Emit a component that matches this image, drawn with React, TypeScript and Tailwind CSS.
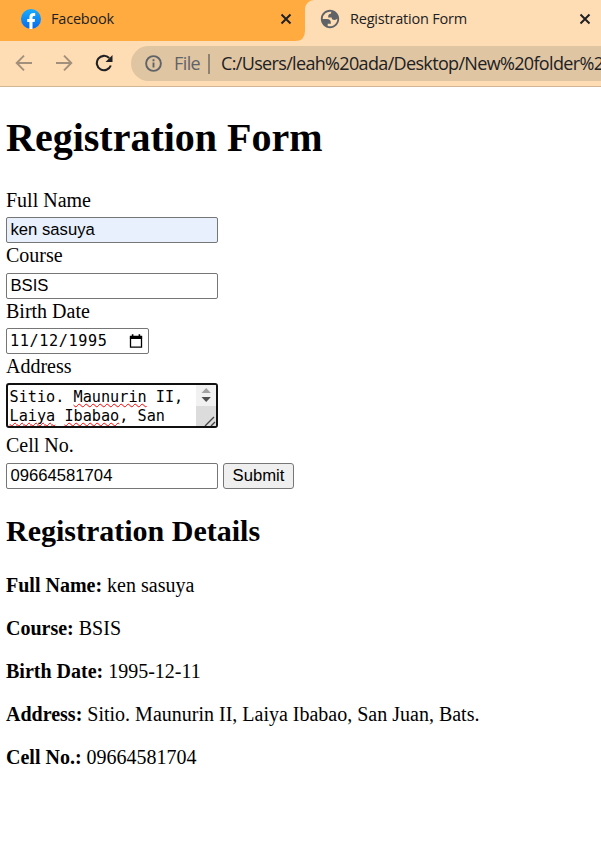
import React from 'react';

const ui = "font-['Open_Sans','Noto_Sans',sans-serif]";
const field =
  "block h-[26px] w-[212px] rounded-[2px] border border-[#767676] px-[3.5px] font-['Liberation_Sans',Arial,sans-serif] text-[16.67px] leading-[22px] text-black outline-none";

function Close() {
  return (
    <svg width="12" height="12" viewBox="0 0 12 12" className="shrink-0" fill="none" stroke="#202124" strokeWidth="2">
      <path d="M1.5 1.5l9 9M10.5 1.5l-9 9" />
    </svg>
  );
}

function Label({ children }: { children: React.ReactNode }) {
  return <label className="block pt-[1px] text-[20px] leading-[22px]">{children}</label>;
}

function Misspelt({ children }: { children: React.ReactNode }) {
  return (
    <span className="underline decoration-[#f00] decoration-wavy decoration-[1.3px] underline-offset-[1px] [text-decoration-skip-ink:none]">
      {children}
    </span>
  );
}

function TabStrip() {
  return (
    <div className={`flex h-[41px] bg-[#ffab40] ${ui} text-[14.5px] text-[#202124]`}>
      <div className="flex h-[41px] w-[305px] items-center bg-[#ffab40] pb-[3px] pl-[21px]">
        <svg width="20" height="20" viewBox="0 0 20 20" className="shrink-0">
          <defs>
            <linearGradient id="fb" x1="0" y1="0" x2="0" y2="1">
              <stop offset="0" stopColor="#19adff" />
              <stop offset="1" stopColor="#0668ed" />
            </linearGradient>
          </defs>
          <circle cx="10" cy="10" r="10" fill="url(#fb)" />
          <path
            d="M8.4 19.9v-6.8H6.2V10h2.2V8.6c0-3.1 1.5-4.5 4.3-4.5.6 0 1.1.1 1.5.2v2.6h-1.1c-1.2 0-1.6.5-1.6 1.7V10h2.6l-.5 3.1h-2.1v6.8a10 10 0 0 1-3.1 0z"
            fill="#fff"
          />
        </svg>
        <span className="ml-[10px] w-[229px] tracking-[-0.2px]">Facebook</span>
        <Close />
        <svg width="10" height="10" viewBox="0 0 10 10" className="-mb-[3px] ml-[3px] shrink-0 self-end" fill="#ffddb4">
          <path d="M10 0v10H0Q10 10 10 0z" />
        </svg>
      </div>
      <div className="flex h-[41px] flex-1 items-center rounded-tl-[9px] bg-[#ffddb4] pb-[3px] pl-[14px]">
        <svg width="22" height="22" viewBox="0 0 24 24" className="shrink-0" fill="#5f6368">
          <path
            d="M12 2C6.48 2 2 6.48 2 12s4.48 10 10 10 10-4.48 10-10S17.52 2 12 2zM4 12h4.4c3.407.022 4.922 1.73 4.543 5.127H9.488v2.47a8.004 8.004 0 0 0 10.498-8.083C19.327 12.504 18.332 13 17 13c-2.137 0-3.206-.916-3.206-2.75h-3.748c-.274-2.728.683-4.092 2.87-4.092 0-.975.327-1.597.811-1.97A8.004 8.004 0 0 0 4 12z"
            fillRule="evenodd"
          />
        </svg>
        <span className="ml-[9px] w-[229px] tracking-[-0.2px] whitespace-nowrap">Registration Form</span>
        <Close />
      </div>
    </div>
  );
}

function Toolbar() {
  return (
    <div className={`flex h-[46px] items-center border-b border-[#d1b694] bg-[#ffddb4] pl-[15px] ${ui}`}>
      <svg width="18" height="18" viewBox="0 0 18 18" className="mb-[2px] shrink-0" fill="none" stroke="#a1907b" strokeWidth="1.9">
        <path d="M17 9H2M9 1.7L1.7 9 9 16.3" />
      </svg>
      <svg width="18" height="18" viewBox="0 0 18 18" className="mb-[2px] ml-[22px] shrink-0" fill="none" stroke="#a1907b" strokeWidth="1.9">
        <path d="M1 9h15M9 1.7L16.3 9 9 16.3" />
      </svg>
      <svg width="18" height="18" viewBox="0 0 18 18" className="mb-[2px] ml-[22px] shrink-0">
        <path d="M15.8 11.5A7.2 7.2 0 1 1 14.2 4" fill="none" stroke="#202124" strokeWidth="2.1" />
        <path d="M17.5 1v7h-7z" fill="#202124" />
      </svg>
      <div className="ml-[18px] flex h-[35px] min-w-0 flex-1 items-center overflow-hidden rounded-l-full bg-[#dfc5a2] pl-[14px] text-[18px] whitespace-nowrap">
        <svg width="17" height="17" viewBox="0 0 17 17" className="shrink-0" fill="none" stroke="#5f6368" strokeWidth="1.9">
          <circle cx="8.5" cy="8.5" r="7.4" />
          <path d="M8.5 7.4v5M8.5 4.3v1.9" />
        </svg>
        <span className="ml-[12px] w-[34px] shrink-0 text-[#5f6368] tracking-[-0.6px]">File</span>
        <span className="h-[20px] w-[2px] shrink-0 bg-[#8e8272]" />
        <span className="ml-[11px] text-[#202124] tracking-[-0.66px]">C:/Users/leah%20ada/Desktop/New%20folder%20</span>
      </div>
    </div>
  );
}

const details = [
  ['Full Name:', 'ken sasuya'],
  ['Course:', 'BSIS'],
  ['Birth Date:', '1995-12-11'],
  ['Address:', 'Sitio. Maunurin II, Laiya Ibabao, San Juan, Bats.'],
  ['Cell No.:', '09664581704'],
];

export default function App() {
  return (
    <div className="h-[861px] w-[601px] overflow-hidden bg-white font-['Liberation_Serif','Times_New_Roman',serif] text-black">
      <TabStrip />
      <Toolbar />
      <main className="pl-[6px]">
        <h1 className="pt-[29px] text-[40px] leading-[44px] font-bold">Registration Form</h1>
        <form className="pt-[28px]" onSubmit={(e) => e.preventDefault()}>
          <Label>Full Name</Label>
          <input className={`${field} mt-[6px] bg-[#e8f0fe]`} defaultValue="ken sasuya" />
          <Label>Course</Label>
          <input className={`${field} mt-[7px] bg-white`} defaultValue="BSIS" />
          <Label>Birth Date</Label>
          <div className="mt-[6px] flex h-[26px] w-[143px] items-center justify-between rounded-[2px] border border-[#767676] pr-[5px] pl-[3px] font-['DejaVu_Sans_Mono',monospace] text-[15.2px]">
            <span className="tracking-[0.6px]">11/12/1995</span>
            <svg width="14" height="15" viewBox="0 0 14 15">
              <path d="M1.5 3h11v10.2h-11z" fill="none" stroke="#000" strokeWidth="1.3" />
              <path d="M.9 1.8h12.2v3.2H.9zM2.8.3h1.6V3H2.8zM9.6.3h1.6V3H9.6z" />
            </svg>
          </div>
          <Label>Address</Label>
          <div className="mt-[6px] flex h-[45px] w-[212px] overflow-hidden rounded-[3px] border-2 border-[#101010]">
            <div className="flex-1 overflow-hidden pt-[3px] pl-[1.5px] font-['DejaVu_Sans_Mono',monospace] text-[15.2px] leading-[19px] whitespace-nowrap">
              <div>
                Sitio. <Misspelt>Maunurin</Misspelt> II,
              </div>
              <div>
                <Misspelt>Laiya</Misspelt> <Misspelt>Ibabao</Misspelt>, San
              </div>
            </div>
            <svg width="20" height="41" viewBox="0 0 20 41" className="shrink-0">
              <path d="M0 0h20v21H0z" fill="#f1f1f1" />
              <path d="M0 21h20v20H0z" fill="#dcdcdc" />
              <path d="M5.5 8l4.7-5 4.7 5z" fill="#a3a3a3" />
              <path d="M5.5 12l4.7 5 4.7-5z" fill="#505050" />
              <path d="M9 41l9-9M15 41l4-4" stroke="#444" strokeWidth="1.4" />
            </svg>
          </div>
          <div className="pt-[5px]">
            <Label>Cell No.</Label>
          </div>
          <div className="mt-[7px] flex gap-[5px]">
            <input className={`${field} bg-white`} defaultValue="09664581704" />
            <button className="h-[26px] w-[71px] rounded-[3px] border border-[#767676] bg-[#efefef] font-['Liberation_Sans',Arial,sans-serif] text-[16.67px] leading-[22px]">
              Submit
            </button>
          </div>
        </form>
        <h2 className="pt-[25px] text-[30px] leading-[34px] font-bold">Registration Details</h2>
        <div className="flex flex-col gap-[21px] pt-[26px] text-[20px] leading-[22px]">
          {details.map(([name, value]) => (
            <p key={name}>
              <strong>{name}</strong> {value}
            </p>
          ))}
        </div>
      </main>
    </div>
  );
}
